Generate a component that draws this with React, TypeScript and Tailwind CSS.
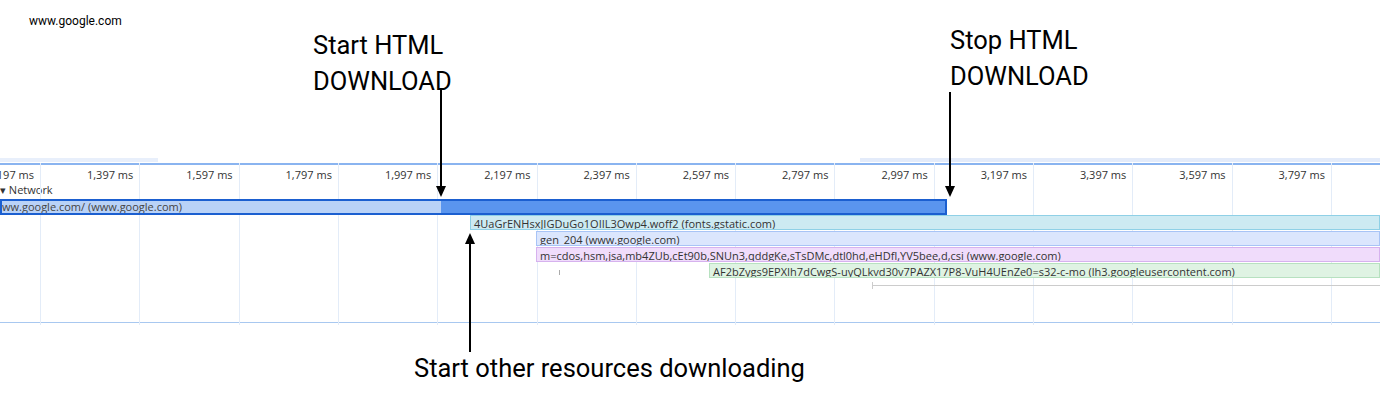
import React from "react";

const ticks = ["197","1,397","1,597","1,797","1,997","2,197","2,397","2,597","2,797","2,997","3,197","3,397","3,597","3,797"];

function Bar({ left, width, bg, border, text }: { left: number; width?: number; bg: string; border: string; text: string }) {
  return (
    <div className="relative h-[16px]">
      <div
        className="absolute top-0 h-[15px] text-[11px] leading-[15px] pl-[3px] text-[#333] whitespace-nowrap overflow-hidden border"
        style={{ left, width: width ?? 1380 - left, background: bg, borderColor: border }}
      >
        {text}
      </div>
    </div>
  );
}

export default function App() {
  const f = { fontFamily: "'Open Sans', 'Noto Sans', sans-serif" };
  const r = { fontFamily: "Roboto, sans-serif" };
  return (
    <div className="relative w-[1380px] h-[408px] bg-white overflow-hidden" style={f}>
      <div className="absolute left-[29px] top-[12px] text-[12px] text-black" style={r}>www.google.com</div>

      <div className="pt-[156px]">
        <div className="absolute top-[163px] left-0 h-[162px] w-full pointer-events-none">
          {ticks.map((_, i) => (
            <div key={i} className="absolute top-0 h-full w-px bg-[#e3ecf8]" style={{ left: 40 + i * 99.3 }} />
          ))}
        </div>
        <div className="relative h-[7px]">
          <div className="absolute left-0 w-[158px] top-[2px] h-[4px] bg-[#e8effb]" />
          <div className="absolute left-[860px] right-0 top-[2px] h-[4px] bg-[#e3ebfa]" />
        </div>
        <div className="h-[2px] bg-[#8ab4f0]" />
        <div className="relative h-[18px] text-[11px] text-[#333]">
          {ticks.map((t, i) => (
            <div key={i} className="absolute top-[2px] text-right w-[80px]" style={{ left: 40 + i * 99.3 - 86 }}>{t} ms</div>
          ))}
        </div>
        <div className="h-[16px] text-[11px] text-[#333] leading-[14px]">▾ Network</div>
        <div className="relative h-[16px]">
          <div className="absolute left-0 top-0 h-[16px] w-[947px] border-2 border-[#1b5fd0] flex">
            <div className="w-[439px] bg-[#b9d2f7] text-[11px] leading-[12px] text-[#444] whitespace-nowrap overflow-hidden">ww.google.com/ (www.google.com)</div>
            <div className="flex-1 bg-[#5a95ee]" />
          </div>
        </div>
        <Bar left={470} bg="#cdeaf2" border="#8fd0e6" text="4UaGrENHsxJIGDuGo1OIIL3Owp4.woff2 (fonts.gstatic.com)" />
        <Bar left={536} bg="#dbe6fd" border="#a8c4f6" text="gen_204 (www.google.com)" />
        <Bar left={536} bg="#f0dcfb" border="#d6b2ee" text="m=cdos,hsm,jsa,mb4ZUb,cEt90b,SNUn3,qddgKe,sTsDMc,dtl0hd,eHDfl,YV5bee,d,csi (www.google.com)" />
        <Bar left={709} bg="#dff3e3" border="#b7e1c0" text="AF2bZygs9EPXIh7dCwgS-uyQLkvd30v7PAZX17P8-VuH4UEnZe0=s32-c-mo (lh3.googleusercontent.com)" />
        <div className="relative h-[43px]">
          <div className="absolute left-[559px] top-[-9px] w-px h-[5px] bg-[#aaa]" />
          <div className="absolute left-[872px] top-[6px] right-0 h-px bg-[#ccc]" />
          <div className="absolute left-[872px] top-[3px] w-px h-[7px] bg-[#ccc]" />
        </div>
        <div className="h-[1px] bg-[#a8c8f0]" />
      </div>

      <div className="absolute left-[313px] top-[27px] text-[25.5px] leading-[36px] text-black" style={r}>Start HTML<br />DOWNLOAD</div>
      <div className="absolute left-[950px] top-[22px] text-[25.5px] leading-[36px] text-black" style={r}>Stop HTML<br />DOWNLOAD</div>
      <div className="absolute left-[414px] top-[350px] text-[25.5px] leading-[36px] text-black" style={r}>Start other resources downloading</div>
      <svg className="absolute left-0 top-0" width="1380" height="408">
        <line x1="441" y1="88" x2="441" y2="186" stroke="black" strokeWidth="2" />
        <polygon points="436,186 446,186 441,197" fill="black" />
        <line x1="950" y1="92" x2="950" y2="186" stroke="black" strokeWidth="2" />
        <polygon points="945,186 955,186 950,197" fill="black" />
        <line x1="470" y1="352" x2="470" y2="244" stroke="black" strokeWidth="2" />
        <polygon points="465,244 475,244 470,233" fill="black" />
      </svg>
    </div>
  );
}
